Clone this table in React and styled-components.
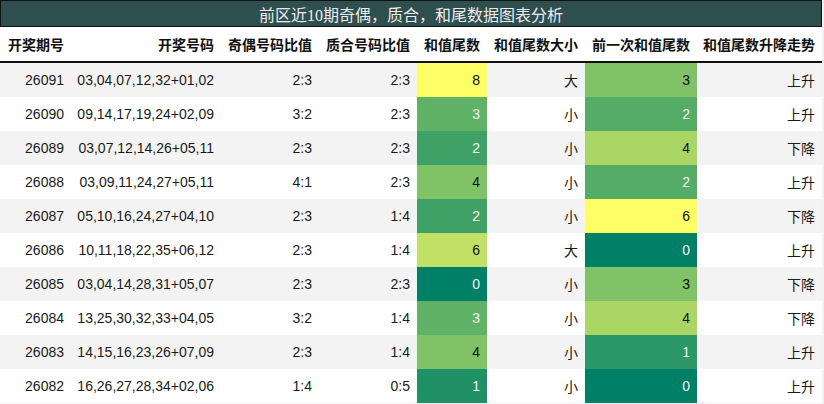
import React from 'react';
import styled, { createGlobalStyle } from 'styled-components';

const GlobalStyle = createGlobalStyle`
  html, body {
    margin: 0;
    padding: 0;
    background: #f2f2f2;
  }
  body {
    font-family: "Liberation Sans", "Noto Sans CJK SC", sans-serif;
  }
`;

const COLS = '71px 150px 98px 98px 70px 98px 112px 125px';

const Page = styled.div`
  width: 822px;
  background: #fff;
`;

const Title = styled.div`
  height: 25px;
  border: 1px solid #111;
  background: #2f4f4f;
  color: #ececec;
  font-family: "Liberation Serif", "Noto Sans CJK SC", serif;
  font-size: 16px;
  display: flex;
  align-items: center;
  justify-content: center;
`;

const Row = styled.div`
  display: grid;
  grid-template-columns: ${COLS};
  height: 34px;
  background: ${(p) => (p.$striped ? '#f3f3f3' : '#fff')};
  border-bottom: ${(p) => (p.$head ? '2px solid #111' : 'none')};
`;

const HeadCell = styled.div`
  display: flex;
  align-items: center;
  justify-content: ${(p) => (p.$left ? 'flex-start' : 'flex-end')};
  padding: 0 7px 0 8px;
  font-weight: bold;
  font-size: 14px;
  color: #111;
  white-space: nowrap;
`;

const Cell = styled.div`
  display: flex;
  align-items: center;
  justify-content: flex-end;
  padding: 0 7px;
  font-size: 14px;
  color: ${(p) => p.$fg || '#1a1a1a'};
  background: ${(p) => p.$bg || 'transparent'};
  white-space: nowrap;
`;

const headers = [
  '开奖期号',
  '开奖号码',
  '奇偶号码比值',
  '质合号码比值',
  '和值尾数',
  '和值尾数大小',
  '前一次和值尾数',
  '和值尾数升降走势',
];

const rows = [
  ['26091', '03,04,07,12,32+01,02', '2:3', '2:3', 8, '大', 3, '上升'],
  ['26090', '09,14,17,19,24+02,09', '3:2', '2:3', 3, '小', 2, '上升'],
  ['26089', '03,07,12,14,26+05,11', '2:3', '2:3', 2, '小', 4, '下降'],
  ['26088', '03,09,11,24,27+05,11', '4:1', '2:3', 4, '小', 2, '上升'],
  ['26087', '05,10,16,24,27+04,10', '2:3', '1:4', 2, '小', 6, '下降'],
  ['26086', '10,11,18,22,35+06,12', '2:3', '1:4', 6, '大', 0, '上升'],
  ['26085', '03,04,14,28,31+05,07', '2:3', '2:3', 0, '小', 3, '下降'],
  ['26084', '13,25,30,32,33+04,05', '3:2', '1:4', 3, '小', 4, '下降'],
  ['26083', '14,15,16,23,26+07,09', '2:3', '1:4', 4, '小', 1, '上升'],
  ['26082', '16,26,27,28,34+02,06', '1:4', '0:5', 1, '小', 0, '上升'],
];

// three stop colour scale, min -> mid -> max
const LOW = [0, 128, 102];
const MID = [128, 194, 102];
const HIGH = [255, 255, 102];

const scale = (v, max) => {
  const t = max ? v / max : 0;
  const [a, b, k] = t < 0.5 ? [LOW, MID, t * 2] : [MID, HIGH, (t - 0.5) * 2];
  const c = a.map((x, i) => Math.round(x + (b[i] - x) * k));
  return {
    bg: `rgb(${c.join(',')})`,
    fg: t < 0.5 ? '#f2f2f2' : '#111',
  };
};

const max5 = Math.max(...rows.map((r) => r[4]));
const max7 = Math.max(...rows.map((r) => r[6]));

const App = () => {
  return (
    <Page>
      <GlobalStyle />
      <Title>前区近10期奇偶，质合，和尾数据图表分析</Title>
      <Row $head>
        {headers.map((h, i) => (
          <HeadCell key={h} $left={i === 0}>{h}</HeadCell>
        ))}
      </Row>
      {rows.map((r, i) => {
        const c5 = scale(r[4], max5);
        const c7 = scale(r[6], max7);
        return (
          <Row key={r[0]} $striped={i % 2 === 0}>
            <Cell>{r[0]}</Cell>
            <Cell>{r[1]}</Cell>
            <Cell>{r[2]}</Cell>
            <Cell>{r[3]}</Cell>
            <Cell $bg={c5.bg} $fg={c5.fg}>{r[4]}</Cell>
            <Cell>{r[5]}</Cell>
            <Cell $bg={c7.bg} $fg={c7.fg}>{r[6]}</Cell>
            <Cell>{r[7]}</Cell>
          </Row>
        );
      })}
    </Page>
  );
};

export default App;
